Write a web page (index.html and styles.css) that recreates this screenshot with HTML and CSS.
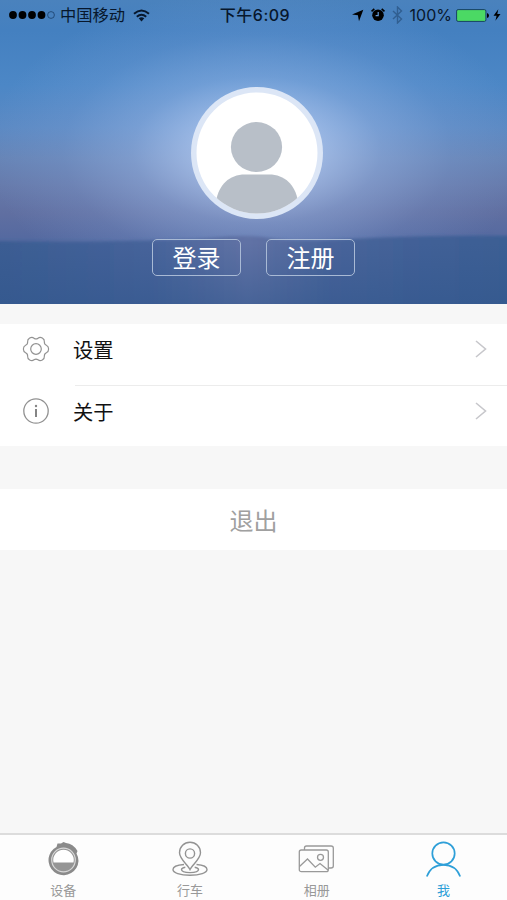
FILE: index.html
```html
<!DOCTYPE html>
<html lang="zh-CN">
<head>
<meta charset="utf-8">
<title>我</title>
<link rel="stylesheet" href="styles.css">
</head>
<body>
<div class="app">
  <header class="hero">
    <svg class="scenery" viewBox="0 0 507 304" preserveAspectRatio="none" aria-hidden="true">
      <defs>
        <linearGradient id="hill" x1="0" x2="1" y1="0" y2="0">
          <stop offset="0" stop-color="#3a5c92"/><stop offset=".3" stop-color="#46639a"/>
          <stop offset=".49" stop-color="#6172a5"/><stop offset=".65" stop-color="#48649a"/>
          <stop offset="1" stop-color="#3a5d93"/>
        </linearGradient>
        <linearGradient id="shade" x1="0" x2="0" y1="0" y2="1">
          <stop offset="0" stop-color="#2f558b" stop-opacity="0"/><stop offset="1" stop-color="#2f558b" stop-opacity=".5"/>
        </linearGradient>
        <filter id="soft" x="-5%" y="-10%" width="110%" height="120%"><feGaussianBlur stdDeviation="1.400"/></filter>
      </defs>
      <path filter="url(#soft)" fill="url(#hill)" d="M-8 241Q60 242 120 241T210 238Q248 234 270 238T350 239Q430 235 515 236V312H-8Z"/>
      <path fill="url(#shade)" d="M0 243H507V304H0Z"/>
    </svg>
    <div class="status">
      <div class="carrier">
        <svg width="46" height="10" viewBox="0 0 46 10"><g><circle cx="4" cy="5" r="3.900"/><circle cx="13.500" cy="5" r="3.900"/><circle cx="23" cy="5" r="3.900"/><circle cx="32.500" cy="5" r="3.900"/></g><circle cx="42" cy="5" r="3.400" fill="none" stroke="#193f68" stroke-width=".8"/></svg>
        <span class="operator">中国移动</span>
        <svg width="17" height="13" viewBox="0 0 17 13"><g fill="none" stroke="#07172c" stroke-width="2"><path d="M1 4.700Q8.500-1.800 16 4.700M3.800 7.700Q8.500 3.700 13.200 7.700"/></g><path fill="#07172c" d="M5.700 9.300Q8.500 7 11.300 9.300L8.500 12.500Z"/></svg>
      </div>
      <div class="time">下午6:09</div>
      <div class="indicators">
        <svg width="13" height="13" viewBox="0 0 13 13"><path d="M12.300.7L8 12.300 6.900 6.200 1 5.500Z"/></svg>
        <svg class="alarm" width="14" height="14" viewBox="0 0 14 14"><circle cx="7" cy="7.200" r="5.800"/><path d="M.5 3.400L3.300.8M13.500 3.400L10.700.8" stroke="#000" stroke-width="1.600"/><path d="M7.200 4V7.600H4.600" fill="none" stroke="#659ad7" stroke-width="1.200"/></svg>
        <svg class="bluetooth" width="11" height="18" viewBox="0 0 11 18"><path d="M1 5L9.500 13 5.500 17V1L9.500 5 1 13" fill="none" stroke="#315f91" stroke-width="1.400"/></svg>
        <span class="percent">100%</span>
        <svg class="battery" width="34" height="13" viewBox="0 0 34 13"><rect x=".6" y=".6" width="29.300" height="11.800" rx="1.500" fill="#4bd964" stroke="#174066" stroke-width="1"/><path d="M31 4Q33 4.500 33 6.500T31 9Z"/></svg>
        <svg class="bolt" width="8" height="12" viewBox="0 0 8 12"><path d="M5.300.3L.5 6.700H3.600L2.400 11.700 7.500 5.100H4.300Z"/></svg>
      </div>
    </div>
    <svg class="avatar" width="132" height="132" viewBox="0 0 132 132" role="img" aria-label="头像">
      <defs><clipPath id="disc"><circle cx="66" cy="66" r="60.500"/></clipPath></defs>
      <circle cx="66" cy="66" r="66" fill="#dce6f6"/>
      <circle cx="66" cy="66" r="60.500" fill="#fff"/>
      <g clip-path="url(#disc)" fill="#b8bfc8"><ellipse cx="65.500" cy="60" rx="25.600" ry="25"/><path d="M25 114C28 98 38 87.500 54 87.500H78C94 87.500 104 98 107 114V132H25Z"/></g>
    </svg>
    <div class="account">
      <button class="outline">登录</button>
      <button class="outline">注册</button>
    </div>
  </header>

  <main>
    <section class="list">
      <div class="row">
        <svg class="lead" width="28" height="28" viewBox="-14 -14 28 28"><g fill="none" stroke="#929292" stroke-width="1.200"><path d="M12.620 0Q12.620 2.680 10.380 3.690 8.140 4.700 8.385 7.145 8.630 9.590 6.310 10.930 3.990 12.270 2 10.840 0 9.400-2 10.840-3.990 12.270-6.310 10.930-8.630 9.590-8.385 7.145-8.140 4.700-10.380 3.690-12.620 2.680-12.620 0-12.620-2.680-10.380-3.690-8.140-4.700-8.385-7.145-8.630-9.590-6.310-10.930-3.990-12.270-2-10.840 0-9.400 2-10.840 3.990-12.270 6.310-10.930 8.630-9.590 8.385-7.145 8.140-4.700 10.380-3.690 12.620-2.680 12.620 0Z"/><circle r="5.300"/></g></svg>
        <span class="label">设置</span>
        <svg class="chevron" width="12" height="18" viewBox="0 0 12 18"><path d="M1 1L10.500 9 1 17"/></svg>
      </div>
      <div class="row">
        <svg class="lead" width="28" height="28" viewBox="-14 -14 28 28"><circle r="12.200" fill="none" stroke="#929292" stroke-width="1.300"/><circle cy="-5" r="1.200" fill="#858585"/><path d="M0-2V6" stroke="#858585" stroke-width="2"/></svg>
        <span class="label">关于</span>
        <svg class="chevron" width="12" height="18" viewBox="0 0 12 18"><path d="M1 1L10.500 9 1 17"/></svg>
      </div>
    </section>
    <button class="logout">退出</button>
  </main>

  <nav class="tabs">
    <a class="tab">
      <svg width="38" height="38" viewBox="0 0 38 38"><path fill="#8a8a8a" d="M12.500 6L13.500 2.500 17 2.500 19.500 1 22 2Q29 2.500 33.500 10L32.500 12.500Q34.500 16 34.500 20A15 15 0 1 1 9.500 8Z"/><circle cx="19.500" cy="19" r="11.800" fill="#959595" stroke="#d8d8d8" stroke-width="1.200"/><path fill="#fff" d="M9.500 21.500A10.300 10.300 0 1 1 29.500 21.500Z"/></svg>
      <span>设备</span>
    </a>
    <a class="tab">
      <svg width="38" height="38" viewBox="0 0 38 38"><g fill="none" stroke="#939393" stroke-width="1.400"><path d="M13 23.500C6 24 2 26 2 28.500 2 31.800 9 34.200 19 34.200S36 31.800 36 28.500C36 26 32 24 25.500 23.500"/><path d="M14.300 26.300Q10.500 27 10.500 28.600C10.500 30.400 14 31.600 19 31.600S27.500 30.400 27.500 28.600Q27.500 27 23.700 26.300"/><path d="M19 28.500C17 24 8.500 18 8.500 11.700A10.500 10.500 0 0 1 29.500 11.700C29.500 18 21 24 19 28.500Z"/><circle cx="19" cy="12.500" r="4.600"/></g></svg>
      <span>行车</span>
    </a>
    <a class="tab">
      <svg width="38" height="38" viewBox="0 0 38 38"><g fill="none" stroke="#999" stroke-width="1.300"><path d="M6.500 9V7Q6.500 5 8.500 5H33Q35.300 5 35.300 7V25Q35.300 27 33 27H30.500"/><rect x="1.300" y="9" width="29" height="21.700" rx="2"/><path d="M1.500 25.500L9.500 18 17.300 26.200 22 22.500 30 29"/><circle cx="22.500" cy="16.300" r="3"/></g></svg>
      <span>相册</span>
    </a>
    <a class="tab active">
      <svg width="38" height="38" viewBox="0 0 38 38"><g fill="none" stroke="#2e9fd8" stroke-width="1.700"><circle cx="18.500" cy="12.500" r="11.200"/><path d="M1.800 35.500C4.500 28.500 10.500 23.900 18.500 23.900S32.500 28.500 35.200 35.500"/></g></svg>
      <span>我</span>
    </a>
  </nav>
</div>
</body>
</html>
```

FILE: styles.css
```css
* { box-sizing: border-box; }
body {
  margin: 0;
  font-family: "Noto Sans CJK SC", sans-serif;
  background: #f7f7f7;
}
svg { display: block; flex: none; }
button { font: inherit; border: 0; padding: 0; background: none; }
.app {
  width: 507px;
  height: 900px;
  display: flex;
  flex-direction: column;
}
.hero {
  position: relative;
  height: 304px;
  display: flex;
  flex-direction: column;
  align-items: center;
  background:
    radial-gradient(ellipse 270px 160px at 257px 150px, rgba(195, 214, 248, .85), rgba(178, 202, 242, .68) 26%, rgba(160, 188, 235, .42) 46%, rgba(145, 175, 228, .17) 72%, rgba(130, 165, 220, 0)),
    linear-gradient(#4a82bd, #4480c0 10%, #4c87c6 28%, #5b89c3 42%, #6684b6 52%, #667aab 61%, #606fa1 70%, #5469a0 79%);
}
.scenery {
  position: absolute;
  inset: 0;
  width: 100%;
  height: 100%;
}
.status {
  position: relative;
  width: 100%;
  height: 30px;
  padding: 0 6px 0 9px;
  display: grid;
  grid-template-columns: 1fr auto 1fr;
  align-items: center;
  color: #07172c;
}
.carrier, .indicators { display: flex; align-items: center; }
.operator { font-size: 16.300px; line-height: 28px; margin: -2px 8px 0 5px; }
.time { font: 500 16px/28px Inter, "Noto Sans CJK SC", sans-serif; letter-spacing: .5px; }
.indicators { justify-content: flex-end; }
.alarm { margin-left: 7px; }
.bluetooth { margin-left: 7px; }
.percent { margin-left: 7px; font: 16px/28px Inter, sans-serif; }
.battery { margin-left: 4px; }
.bolt { margin-left: 3px; }
.avatar { position: relative; margin: 57px 0 0 7px; }
.account {
  position: relative;
  display: flex;
  gap: 25px;
  margin: 20px 0 0;
}
.outline {
  width: 89px;
  height: 37px;
  border: 1px solid #a9bad5;
  border-radius: 5px;
  color: #fff;
  font-size: 24px;
  line-height: 33px;
  padding-bottom: 2px;
}
main { flex: 1; padding-top: 20px; }
.list { background: #fff; }
.row {
  height: 61px;
  display: flex;
  align-items: center;
  padding: 0 20px 11px 22px;
}
.row + .row {
  padding-bottom: 9px;
  background: linear-gradient(#ececec, #ececec) 75px 0 / 432px 1px no-repeat;
}
.label {
  flex: 1;
  margin-left: 23px;
  font-size: 20.300px;
  line-height: 30px;
  color: #111;
}
.chevron { fill: none; stroke: #c7c7cb; stroke-width: 1.600; }
.logout {
  display: block;
  width: 100%;
  height: 61px;
  margin-top: 43px;
  padding-bottom: 1px;
  background: #fff;
  color: #a0a0a0;
  font-size: 24px;
}
.tabs {
  height: 67px;
  display: grid;
  grid-template-columns: repeat(4, 1fr);
  border-top: 2px solid #dcdcdc;
  background: #fdfdfd;
}
.tab {
  display: flex;
  flex-direction: column;
  align-items: center;
  padding-top: 6px;
  color: #999;
  font-size: 13px;
  line-height: 20px;
}
.tab span { margin-top: 1px; }
.active { color: #2e9fd8; }
```
